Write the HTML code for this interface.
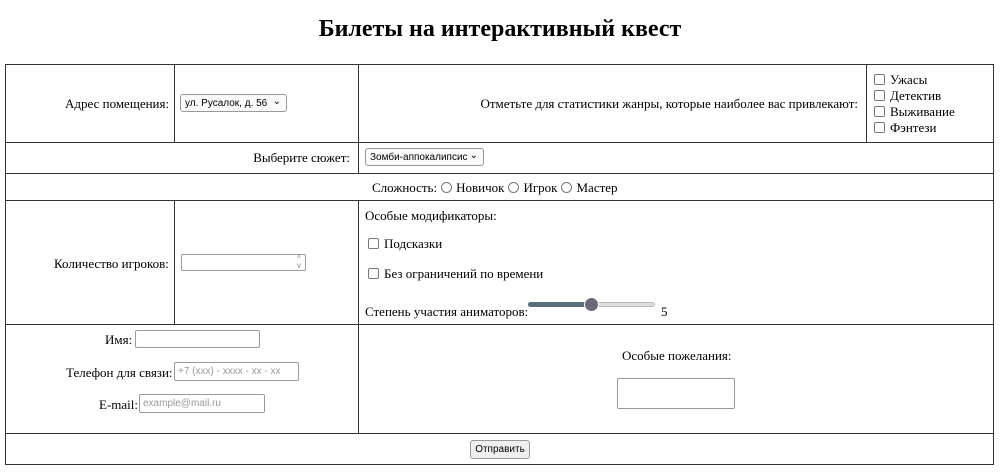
<!DOCTYPE html>
<html><head><meta charset="utf-8"><style>
*{box-sizing:border-box}
body{margin:0;width:1000px;height:472px;background:#fff;font-family:"Liberation Serif",serif;font-size:13px;color:#000;position:relative;overflow:hidden}
.a{position:absolute;white-space:nowrap}
.h{position:absolute;height:1px;background:#333}
.v{position:absolute;width:1px;background:#333}
.sel{position:absolute;border:1px solid #999;border-radius:3px;background:#fafafa;font-family:"Liberation Sans",sans-serif;font-size:10px;padding:3px 4px;white-space:nowrap;overflow:hidden}
.sel i{position:absolute;right:5px;top:1px;font-style:normal;font-size:10px}
.inp{position:absolute;border:1px solid #999;border-radius:2px;background:#fff;font-family:"Liberation Sans",sans-serif;font-size:10px;color:#999;padding:3px 3px;white-space:nowrap;overflow:hidden}
.cb{display:inline-block;width:11px;height:11px;border:1px solid #777;border-radius:2px;vertical-align:-1px;margin-right:5px;background:#fff}
.rb{display:inline-block;width:11px;height:11px;border:1px solid #777;border-radius:50%;vertical-align:-1px;margin:0 4px}
</style></head><body>
<div class="a" style="left:0;width:1000px;top:16px;text-align:center;font-size:24px;font-weight:bold">Билеты на интерактивный квест</div>

<div class="h" style="left:5px;width:989px;top:64px"></div>
<div class="h" style="left:5px;width:989px;top:142px"></div>
<div class="h" style="left:5px;width:989px;top:173px"></div>
<div class="h" style="left:5px;width:989px;top:200px"></div>
<div class="h" style="left:5px;width:989px;top:324px"></div>
<div class="h" style="left:5px;width:989px;top:433px"></div>
<div class="h" style="left:5px;width:989px;top:464px"></div>
<div class="v" style="left:5px;top:64px;height:401px"></div>
<div class="v" style="left:993px;top:64px;height:401px"></div>
<div class="v" style="left:174px;top:64px;height:78px"></div>
<div class="v" style="left:358px;top:64px;height:78px"></div>
<div class="v" style="left:866px;top:64px;height:78px"></div>
<div class="v" style="left:358px;top:142px;height:31px"></div>
<div class="v" style="left:174px;top:200px;height:124px"></div>
<div class="v" style="left:358px;top:200px;height:234px"></div>

<div class="a" style="left:65px;top:96px">Адрес помещения:</div>
<div class="sel" style="left:180px;top:94px;width:107px;height:18px">ул. Русалок, д. 56<i>&#8964;</i></div>
<div class="a" style="right:142px;top:96px">Отметьте для статистики жанры, которые наиболее вас привлекают:</div>
<div class="a" style="left:874px;top:72px;line-height:16px"><span class="cb"></span>Ужасы<br><span class="cb"></span>Детектив<br><span class="cb"></span>Выживание<br><span class="cb"></span>Фэнтези</div>

<div class="a" style="right:650px;top:150px">Выберите сюжет:</div>
<div class="sel" style="left:365px;top:148px;width:119px;height:18px">Зомби-аппокалипсис<i>&#8964;</i></div>

<div class="a" style="left:372px;top:180px">Сложность:<span class="rb"></span>Новичок<span class="rb"></span>Игрок<span class="rb"></span>Мастер</div>

<div class="a" style="left:54px;top:256px">Количество игроков:</div>
<div class="inp" style="left:181px;top:254px;width:125px;height:17px"><span style="position:absolute;right:4px;top:0;font-size:8px;line-height:7px;color:#888">^<br>v</span></div>
<div class="a" style="left:365px;top:208px">Особые модификаторы:</div>
<div class="a" style="left:368px;top:236px"><span class="cb"></span>Подсказки</div>
<div class="a" style="left:368px;top:266px"><span class="cb"></span>Без ограничений по времени</div>
<div class="a" style="left:365px;top:304px">Степень участия аниматоров:</div>
<div style="position:absolute;left:528px;top:302px;width:127px;height:5px;border-radius:3px;background:#ddd;border:1px solid #bbb"></div>
<div style="position:absolute;left:528px;top:302px;width:64px;height:5px;border-radius:3px;background:#5a6e7a"></div>
<div style="position:absolute;left:584px;top:297px;width:15px;height:15px;border-radius:50%;background:#6a6a78;border:1px solid #fff"></div>
<div class="a" style="left:661px;top:304px">5</div>

<div class="a" style="left:105px;top:332px">Имя:</div>
<div class="inp" style="left:135px;top:330px;width:125px;height:18px"></div>
<div class="a" style="left:66px;top:365px">Телефон для связи:</div>
<div class="inp" style="left:174px;top:362px;width:125px;height:19px">+7 (xxx) - xxxx - xx - xx</div>
<div class="a" style="left:99px;top:397px">E-mail:</div>
<div class="inp" style="left:139px;top:394px;width:126px;height:19px">example@mail.ru</div>

<div class="a" style="left:622px;top:348px">Особые пожелания:</div>
<div class="inp" style="left:617px;top:378px;width:118px;height:31px"></div>

<div class="sel" style="left:470px;top:440px;width:60px;height:19px;color:#000;background:#efefef;text-align:center;padding:3px 0">Отправить</div>
</body></html>
